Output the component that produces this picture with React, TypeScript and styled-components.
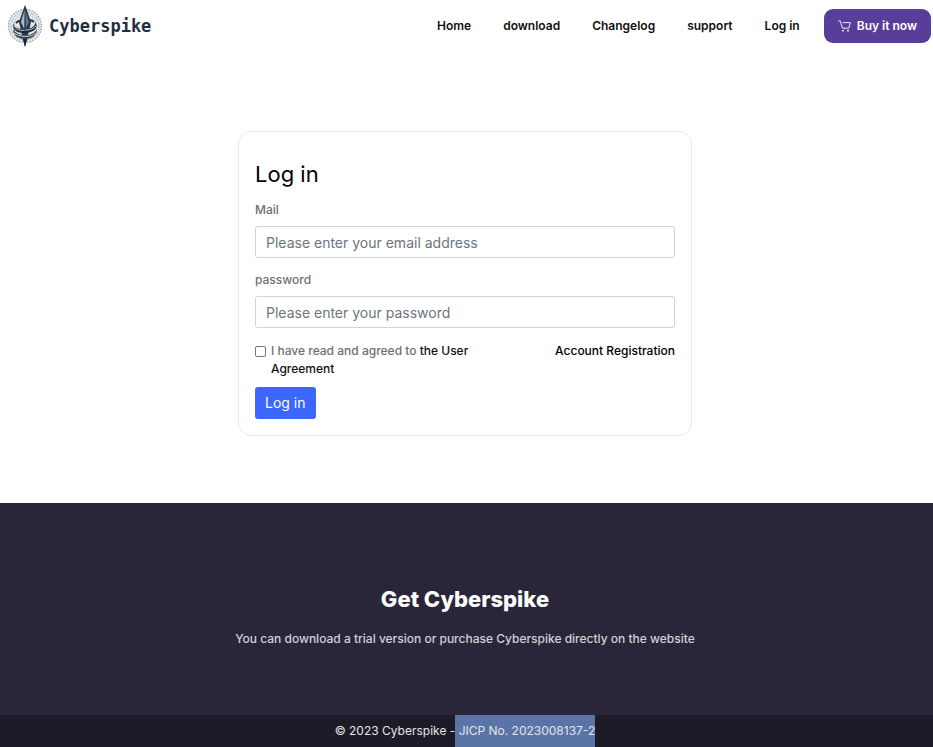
import React from "react";
import styled, { createGlobalStyle } from "styled-components";

const GlobalStyle = createGlobalStyle`
  *, *::before, *::after { box-sizing: border-box; }
  body {
    margin: 0;
    background: #fff;
    color: #000;
    font-family: Inter, "Liberation Sans", sans-serif;
    font-size: 12px;
    line-height: 18px;
  }
  #root { min-height: 100vh; display: flex; flex-direction: column; }
  a { color: inherit; text-decoration: none; }
  h1, h2, p { margin: 0; }
`;

const Header = styled.header`
  display: flex;
  align-items: center;
  justify-content: space-between;
  height: 52px;
  padding: 0 2px 0 6px;
`;

const Brand = styled.a`
  display: flex;
  align-items: center;
  gap: 5px;
  color: #1f2e40;
  font-family: "DejaVu Sans Mono", monospace;
  font-size: 17px;
  font-weight: 700;
  line-height: 24px;
`;

const Nav = styled.nav`
  display: flex;
  align-items: center;
  gap: 32px;
`;

const NavLink = styled.a`
  color: #111;
  font-weight: 600;
`;

const BuyLink = styled.a`
  display: flex;
  align-items: center;
  gap: 6px;
  height: 34px;
  margin-left: -8px;
  padding: 0 14px;
  border-radius: 9px;
  background: #593d9b;
  color: #fff;
  font-weight: 600;
`;

const Main = styled.main`
  flex: 1;
  padding: 79px 19px 67px 16px;
`;

const Card = styled.form`
  width: 100%;
  max-width: 454px;
  margin: 0 auto;
  padding: 27px 16px 16px;
  border: 1px solid #e9e9ec;
  border-radius: 13px;
`;

const Title = styled.h1`
  margin-bottom: 12px;
  font-size: 22px;
  font-weight: 400;
  line-height: 30px;
`;

const Field = styled.div`
  display: flex;
  flex-direction: column;
  gap: 7px;
  margin-bottom: 13px;
`;

const Label = styled.label`
  color: #6f6f6f;
  font-weight: 500;
`;

const Input = styled.input`
  width: 100%;
  height: 32px;
  padding: 0 10px;
  border: 1px solid #ced4da;
  border-radius: 3px;
  background: #fff;
  color: #212529;
  font: inherit;
  font-size: 14px;
  &::placeholder { color: #6c757d; opacity: 1; }
`;

const Options = styled.div`
  display: flex;
  justify-content: space-between;
  align-items: flex-start;
  padding-top: 1px;
  margin-bottom: 9px;
  font-weight: 500;
`;

const Agreement = styled.label`
  display: flex;
  align-items: flex-start;
  gap: 5px;
  max-width: 240px;
  color: #6f6f6f;
  a { color: #111; }
`;

const Checkbox = styled.input`
  appearance: none;
  flex: none;
  width: 11px;
  height: 11px;
  margin: 4px 0 0;
  border: 1px solid #767676;
  border-radius: 2px;
  background: #fff;
  &:checked { background: #3b66ff; border-color: #3b66ff; }
`;

const Submit = styled.button`
  display: block;
  height: 32px;
  padding: 0 10px;
  border: 0;
  border-radius: 3px;
  background: #3b66ff;
  color: #fff;
  font: inherit;
  font-size: 14px;
`;

const Promo = styled.section`
  padding: 80px 19px 67px 16px;
  background: #2a2639;
  color: #d2d1d5;
  font-weight: 500;
  text-align: center;
`;

const PromoTitle = styled.h2`
  margin-bottom: 15px;
  color: #fff;
  font-size: 22px;
  font-weight: 800;
  line-height: 32px;
`;

const Legal = styled.footer`
  display: flex;
  justify-content: center;
  padding: 0 19px 0 16px;
  background: #1d1b27;
  color: #e4e4e6;
  line-height: 32px;
  white-space: pre;
`;

const Licence = styled.a`
  background: #5b74a8;
`;

const Emblem = () => (
  <svg width="38" height="42" viewBox="0 0 38 42" aria-hidden="true">
    <circle cx="19" cy="21" r="17" fill="#e4e6e8" />
    <g fill="none" stroke="#9aa0a6">
      <circle cx="19" cy="21" r="16.5" strokeWidth="1.4" strokeDasharray="1.3 1.5" />
      <circle cx="19" cy="21" r="14" strokeWidth="1" strokeDasharray="2 1 1 2" />
      <circle cx="19" cy="21" r="11.5" strokeWidth="1" strokeDasharray="1 1.8" />
    </g>
    <path d="M19 0 25 17 22 30 19 42 16 30 13 17Z" fill="#25364a" />
    <path d="M9 17c-3 4 2 8 11 7 7-1 10-4 9-7 4 5 0 10-9 11C10 29 4 23 9 17Z" fill="#1c2a3b" />
    <path d="M7 24c2 4 7 6 12 6 6 0 10-2 12-6 0 7-6 10-12 10S7 31 7 24Z" fill="#34475a" />
    <path d="M8 21c2 4 7 5 12 4 5 0 8-2 10-4M8 28c5 4 17 5 22 0" fill="none" stroke="#c3cdd5" strokeWidth="1" />
    <path d="M10 18c2-2 4-3 6-2M28 17c-2-2-4-2-6-1" fill="none" stroke="#25364a" strokeWidth="2" />
    <path d="M19 1 24 17 19 26 14 17Z" fill="#2a3d50" />
    <path d="M18.6 5 18.2 24 15 17Z" fill="#a9bac6" />
    <path d="M19.6 6 22.8 17 20 23Z" fill="#647b8d" />
    <path d="M17 34h4l-2 8Z" fill="#142133" />
  </svg>
);

const Cart = () => (
  <svg width="13" height="12" viewBox="0 0 13 12" fill="none" stroke="currentColor" strokeWidth="0.9" strokeLinecap="round" strokeLinejoin="round" aria-hidden="true">
    <path d="M.6.9h1.6l2.3 7.3h6.3l1.6-5.6H5.1" />
    <circle cx="5.1" cy="10.7" r=".9" fill="currentColor" stroke="none" />
    <circle cx="10" cy="10.7" r=".9" fill="currentColor" stroke="none" />
  </svg>
);

const links = ["Home", "download", "Changelog", "support", "Log in"];

export default function App() {
  return (
    <>
      <GlobalStyle />
      <Header>
        <Brand href="#"><Emblem />Cyberspike</Brand>
        <Nav>
          {links.map((text) => <NavLink key={text} href="#">{text}</NavLink>)}
          <BuyLink href="#"><Cart />Buy it now</BuyLink>
        </Nav>
      </Header>
      <Main>
        <Card onSubmit={(e) => e.preventDefault()}>
          <Title>Log in</Title>
          <Field>
            <Label htmlFor="mail">Mail</Label>
            <Input id="mail" type="email" placeholder="Please enter your email address" />
          </Field>
          <Field>
            <Label htmlFor="password">password</Label>
            <Input id="password" type="password" placeholder="Please enter your password" />
          </Field>
          <Options>
            <Agreement>
              <Checkbox type="checkbox" />
              <span>I have read and agreed to <a href="#">the User Agreement</a></span>
            </Agreement>
            <a href="#">Account Registration</a>
          </Options>
          <Submit type="submit">Log in</Submit>
        </Card>
      </Main>
      <Promo>
        <PromoTitle>Get Cyberspike</PromoTitle>
        <p>You can download a trial version or purchase Cyberspike directly on the website</p>
      </Promo>
      <Legal>
        <span>© 2023 Cyberspike -</span>
        <Licence href="#"> JICP No. 2023008137-2</Licence>
      </Legal>
    </>
  );
}
